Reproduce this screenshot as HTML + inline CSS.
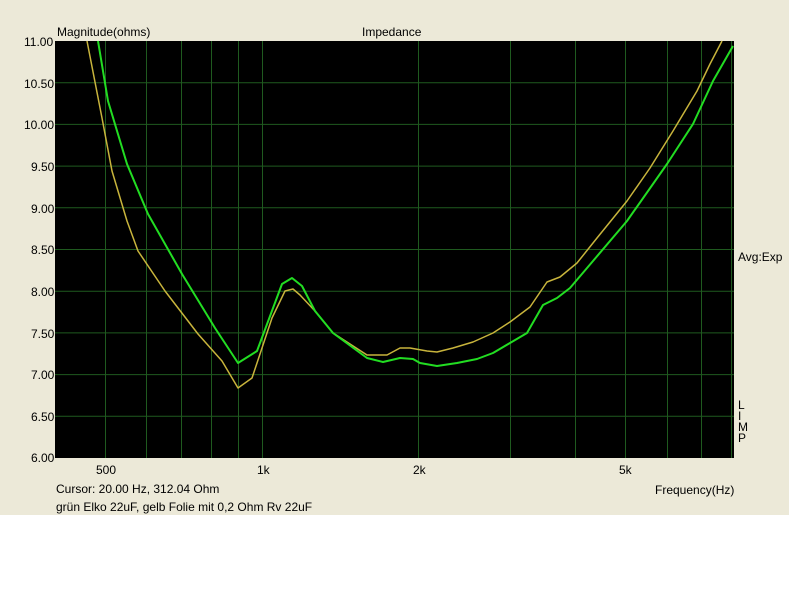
<!DOCTYPE html>
<html><head><style>
body{margin:0;width:800px;height:600px;background:#fff;position:relative;overflow:hidden;font-family:"Liberation Sans",sans-serif;font-size:12px;color:#000}
#bg{position:absolute;left:0;top:0;width:789px;height:515px;background:#ece9d8}
.t{position:absolute;white-space:nowrap}
</style></head><body>
<div id="bg"></div>
<svg style="position:absolute;left:0;top:0" width="800" height="600">
<rect x="55" y="41" width="679" height="417" fill="#000"/>
<g stroke="#1f5a1f" stroke-width="1">
<line x1="55" y1="82.7" x2="734" y2="82.7"/><line x1="55" y1="124.4" x2="734" y2="124.4"/>
<line x1="55" y1="166.1" x2="734" y2="166.1"/><line x1="55" y1="207.8" x2="734" y2="207.8"/>
<line x1="55" y1="249.5" x2="734" y2="249.5"/><line x1="55" y1="291.2" x2="734" y2="291.2"/>
<line x1="55" y1="332.9" x2="734" y2="332.9"/><line x1="55" y1="374.6" x2="734" y2="374.6"/>
<line x1="55" y1="416.3" x2="734" y2="416.3"/>
<line x1="105.5" y1="41" x2="105.5" y2="458"/><line x1="146.5" y1="41" x2="146.5" y2="458"/>
<line x1="181.5" y1="41" x2="181.5" y2="458"/><line x1="211.5" y1="41" x2="211.5" y2="458"/>
<line x1="238.5" y1="41" x2="238.5" y2="458"/><line x1="262.5" y1="41" x2="262.5" y2="458"/>
<line x1="418.5" y1="41" x2="418.5" y2="458"/><line x1="510.5" y1="41" x2="510.5" y2="458"/>
<line x1="575.5" y1="41" x2="575.5" y2="458"/><line x1="625.5" y1="41" x2="625.5" y2="458"/>
<line x1="667.5" y1="41" x2="667.5" y2="458"/><line x1="701.5" y1="41" x2="701.5" y2="458"/>
<line x1="731.5" y1="41" x2="731.5" y2="458"/>
</g>
<polyline fill="none" stroke="#c8b43c" stroke-width="1.5" stroke-linejoin="round" points="87,41 102,118 112,171 127,221 138,251 165,291 198,334 222,361 238,388 252,378 272,318 285,291 293,289 300,295 315,311 333,333 367,355 387,355 400,348 410,348 427,351 437,352 453,348 473,342 493,333 510,322 530,307 547,282 560,277 577,263 597,238 627,201 650,168 673,131 697,91 710,64 722,41"/>
<polyline fill="none" stroke="#22dd22" stroke-width="2" stroke-linejoin="round" points="98,41 108,101 127,164 148,214 182,274 215,328 238,363 257,351 282,284 292,278 302,286 315,311 333,333 367,358 383,362 400,358 413,359 420,363 437,366 457,363 477,359 493,353 510,343 527,333 543,305 557,298 570,288 593,261 627,221 667,164 693,124 713,81 733,46"/>
</svg>
<div class="t" style="left:57px;top:25px">Magnitude(ohms)</div>
<div class="t" style="left:362px;top:25px">Impedance</div>
<div class="t" style="left:24px;top:35px">11.00</div>
<div class="t" style="left:24px;top:77px">10.50</div>
<div class="t" style="left:24px;top:118px">10.00</div>
<div class="t" style="left:31px;top:160px">9.50</div>
<div class="t" style="left:31px;top:202px">9.00</div>
<div class="t" style="left:31px;top:243px">8.50</div>
<div class="t" style="left:31px;top:285px">8.00</div>
<div class="t" style="left:31px;top:327px">7.50</div>
<div class="t" style="left:31px;top:368px">7.00</div>
<div class="t" style="left:31px;top:410px">6.50</div>
<div class="t" style="left:31px;top:451px">6.00</div>
<div class="t" style="left:96px;top:463px">500</div>
<div class="t" style="left:257px;top:463px">1k</div>
<div class="t" style="left:413px;top:463px">2k</div>
<div class="t" style="left:619px;top:463px">5k</div>
<div class="t" style="left:56px;top:482px">Cursor: 20.00 Hz, 312.04 Ohm</div>
<div class="t" style="left:56px;top:500px">grün Elko 22uF, gelb Folie mit 0,2 Ohm Rv 22uF</div>
<div class="t" style="left:655px;top:483px">Frequency(Hz)</div>
<div class="t" style="left:738px;top:250px">Avg:Exp</div>
<div class="t" style="left:738px;top:400px;line-height:11px">L<br>I<br>M<br>P</div>
</body></html>
